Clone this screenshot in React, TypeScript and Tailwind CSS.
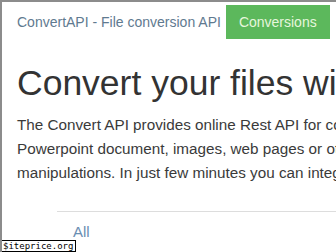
export default function App() {
  return (
    <div
      className="relative w-[336px] h-[252px] overflow-hidden bg-white border-t-2 border-l-2 border-[#8c8c8c]"
      style={{ fontFamily: '"Liberation Sans", Arial, sans-serif' }}
    >
      <div className="flex items-center pt-[3px] pl-[15px] whitespace-nowrap">
        <span className="text-[14px] leading-[20px] text-[#5f7a90]">ConvertAPI - File conversion API</span>
        <span className="ml-[5px] h-[34px] px-[13px] flex items-center bg-[#5cb85c] text-[14px] text-[#e6f6dc]">
          Conversions
        </span>
      </div>
      <h1 className="mt-[24px] pl-[15px] text-[35.5px] leading-[40px] text-[#333333] whitespace-nowrap">
        Convert your files with ease
      </h1>
      <div className="mt-[10px] pl-[15px] text-[15.25px] leading-[24px] text-[#3a3a3a] whitespace-nowrap">
        <div>The Convert API provides online Rest API for converting</div>
        <div>Powerpoint document, images, web pages or other file</div>
        <div>manipulations. In just few minutes you can integrate it</div>
      </div>
      <div className="mt-[26px] ml-[55px] h-px bg-[#dddddd]" />
      <div className="mt-[10px] pl-[71px] text-[15px] leading-[20px] text-[#6a8eb2]">All</div>
      <div
        className="absolute left-[-2px] bottom-0 px-[2px] h-[12px] flex items-center bg-white border border-black text-[9px] leading-none text-black"
        style={{ fontFamily: '"DejaVu Sans Mono", monospace' }}
      >
        $iteprice.org
      </div>
    </div>
  );
}
